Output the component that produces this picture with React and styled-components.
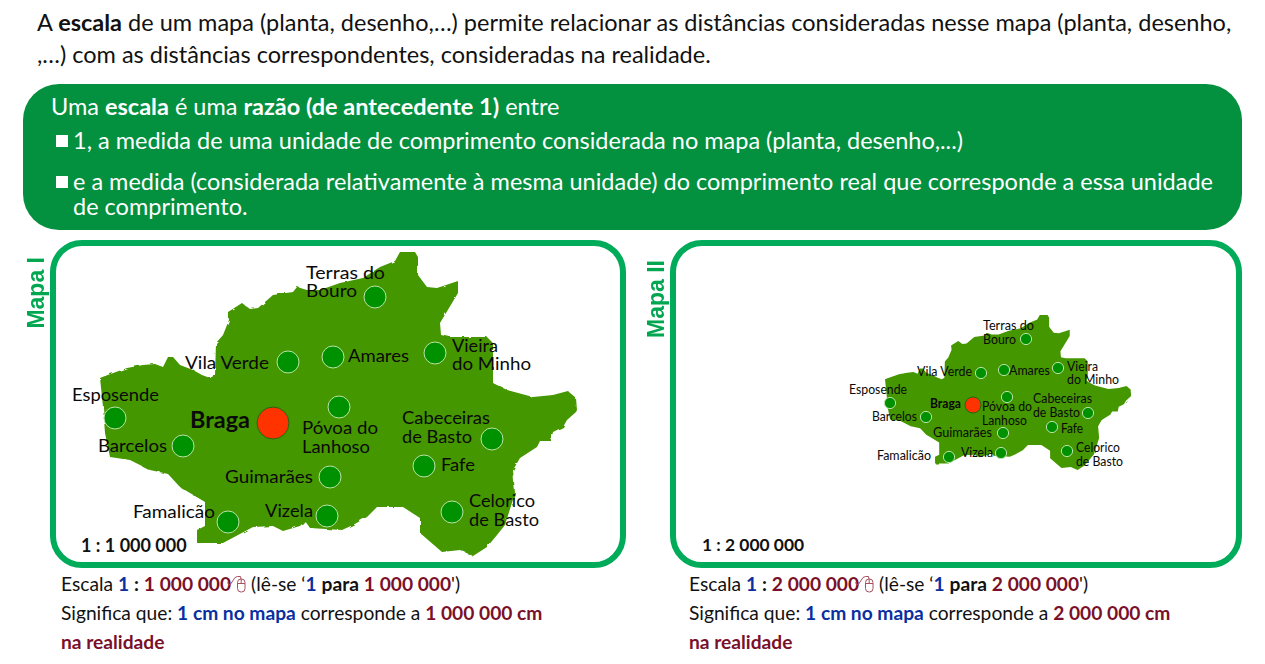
import React from "react";
import styled, { createGlobalStyle } from "styled-components";

const Global = createGlobalStyle`
  html, body { margin: 0; padding: 0; background: #fff; }
  body { font-family: Lato, "Open Sans", sans-serif; color: #111; }
`;

const Page = styled.div`
  width: 1265px;
  height: 664px;
  overflow: hidden;
`;
const Intro = styled.p`
  margin: 0;
  padding: 6px 0 0 37px;
  height: 84px;
  box-sizing: border-box;
  font-size: 23.5px;
  line-height: 32px;
  white-space: nowrap;
  b { font-weight: 700; }
`;
const GreenBox = styled.section`
  margin: 0 23px;
  height: 146px;
  box-sizing: border-box;
  padding: 10px 20px 0 28px;
  border-radius: 36px;
  background: #03903f;
  color: #fff;
  font-size: 23.5px;
  line-height: 25px;
`;
const BoxLead = styled.div`
  height: 25px;
`;
const BoxItem = styled.div`
  display: flex;
  align-items: flex-start;
  gap: 5px;
  margin: ${p => p.$top}px 0 0 5px;
`;
const Square = styled.span`
  flex: none;
  width: 12px;
  height: 12px;
  margin-top: 7px;
  background: #fff;
`;
const MapsRow = styled.div`
  display: flex;
  margin-top: 10px;
  padding-left: 23px;
  gap: 17px;
`;
const MapBlock = styled.div`
  display: grid;
  grid-template-columns: 27px ${p => p.$w}px;
  grid-template-rows: 328px auto;
`;
const SideLabel = styled.div`
  writing-mode: vertical-rl;
  transform: rotate(180deg);
  font-family: "Liberation Sans", Arial, sans-serif;
  font-weight: 700;
  font-size: 23px;
  line-height: 22px;
  color: #00a650;
  width: 22px;
  justify-self: start;
  margin-left: 2px;
  align-self: start;
  margin-top: ${p => p.$top}px;
`;
const Panel = styled.div`
  position: relative;
  box-sizing: border-box;
  border: 6px solid #00ab5a;
  border-radius: 32px;
  overflow: hidden;
`;
const MapSvg = styled.svg`
  display: block;
  width: 100%;
  height: 100%;
`;
const ScaleTag = styled.div`
  position: absolute;
  left: ${p => p.$left}px;
  bottom: 6px;
  font-weight: 700;
  font-size: ${p => p.$size}px;
  line-height: 22px;
  color: #111;
  white-space: nowrap;
`;
const Caption = styled.div`
  grid-column: 2;
  padding-left: ${p => p.$pad}px;
  font-size: 19.2px;
  line-height: 29px;
  margin-top: 1px;
  white-space: nowrap;
  color: #111;
`;
const Blue = styled.b`
  color: #0a2f9f;
`;
const Maroon = styled.b`
  color: #7a1029;
`;
const Dark = styled.b`
  color: #111;
`;
const MouseIcon = styled.svg`
  display: inline-block;
  width: 22px;
  height: 18px;
  vertical-align: -2px;
  margin: 0 3px 0 -5px;
`;
const PlaceLabel = styled.text`
  font-family: Lato, sans-serif;
  font-size: ${p => p.$size}px;
  font-weight: ${p => (p.$bold ? 700 : 400)};
  fill: #0a0a0a;
`;

const OUTLINE = [
  [100,378],[105,376],[127,368],[143,365],[155,364],[163,367],[168,357],[173,357],[180,365],[193,370],[202,375],[210,378],[215,375],[216,343],[223,335],[229,320],[228,312],[242,303],[250,309],[258,308],[273,295],[293,292],[297,287],[307,290],[320,290],[340,283],[363,278],[380,267],[395,261],[400,252],[415,252],[418,257],[418,275],[427,287],[437,288],[458,281],[458,293],[440,323],[441,335],[450,337],[487,337],[493,343],[493,383],[507,390],[533,397],[553,395],[568,391],[576,398],[577,410],[576,412],[567,420],[563,427],[553,432],[551,441],[540,441],[537,447],[520,458],[513,470],[515,493],[505,525],[497,535],[487,547],[473,556],[460,550],[442,552],[420,533],[420,518],[403,507],[377,507],[367,517],[353,525],[342,530],[310,528],[305,521],[300,526],[283,531],[273,526],[253,527],[223,543],[197,543],[197,530],[205,526],[205,502],[180,487],[168,474],[150,470],[130,460],[110,457],[105,433],[103,407],
].map(p => p.join(",")).join(" ");

const MAP_ONE = {
  size: 18, r: 11, capital: 16,
  labels: [
    ["Terras do",306,279,79],["Bouro",306,297,51],["Vila Verde",185,369,84],["Amares",348,362,61],
    ["Vieira",452,352,46],["do Minho",452,370,79],["Esposende",72,401,87],["Barcelos",98,452,69],
    ["Póvoa do",302,434,76],["Lanhoso",302,453,68],["Guimarães",225,483,88],["Famalicão",133,518,82],
    ["Vizela",265,517,48],["Cabeceiras",402,424,88],["de Basto",402,443,70],["Fafe",441,471,34],
    ["Celorico",469,507,66],["de Basto",469,526,70],
  ],
  braga: ["Braga",190,428,60,23],
  bragaDot: [273,423],
  dots: [[288,362],[333,357],[375,297],[435,353],[339,407],[115,418],[183,446],[330,477],[327,516],[228,522],[492,439],[424,466],[452,512]],
};
const MAP_TWO = {
  size: 12.5, r: 5.6, capital: 8,
  labels: [
    ["Terras do",983,330,51],["Bouro",983,344,33],["Vila Verde",917,376,55],["Amares",1009,375,41],
    ["Vieira",1067,371,31],["do Minho",1067,384,52],["Esposende",849,394,58],["Barcelos",872,421,45],
    ["Póvoa do",982,411,50],["Lanhoso",982,425,45],["Guimarães",933,437,59],["Famalicão",877,460,54],
    ["Vizela",961,457,32],["Cabeceiras",1033,403,59],["de Basto",1033,417,47],["Fafe",1061,433,22],
    ["Celorico",1076,452,44],["de Basto",1076,466,47],
  ],
  braga: ["Braga",930,408,31,12.5],
  bragaDot: [973,405],
  dots: [[1026,339],[981,373],[1004,370],[1058,368],[1007,397],[890,403],[926,417],[1088,413],[1052,427],[1003,433],[1001,453],[949,457],[1067,451]],
};

function RegionMap({ data, viewBox, transform, id, rough }) {
  return (
    <MapSvg viewBox={viewBox} preserveAspectRatio="none">
      <defs>
        <filter id={id} x="-5%" y="-5%" width="110%" height="110%" colorInterpolationFilters="sRGB">
          <feTurbulence type="fractalNoise" baseFrequency="0.12" numOctaves="2" seed="4" />
          <feDisplacementMap in="SourceGraphic" scale={rough} />
        </filter>
      </defs>
      <g filter={`url(#${id})`}>
        <polygon points={OUTLINE} transform={transform} fill="#459700" />
      </g>
      {data.dots.map(([cx, cy]) => (
        <circle key={`${cx}-${cy}`} cx={cx} cy={cy} r={data.r} fill="#009100" stroke="#b9e3a8" strokeWidth="1" />
      ))}
      <circle cx={data.bragaDot[0]} cy={data.bragaDot[1]} r={data.capital} fill="#ff3300" stroke="#1c6b12" strokeWidth="1" />
      {data.labels.map(([t, x, y, w]) => (
        <PlaceLabel key={`${t}-${x}`} x={x} y={y} $size={data.size} textLength={w} lengthAdjust="spacingAndGlyphs">{t}</PlaceLabel>
      ))}
      <PlaceLabel x={data.braga[1]} y={data.braga[2]} $size={data.braga[4]} $bold textLength={data.braga[3]} lengthAdjust="spacingAndGlyphs">{data.braga[0]}</PlaceLabel>
    </MapSvg>
  );
}

const Mouse = () => (
  <MouseIcon viewBox="0 0 22 18" fill="none" stroke="#a9505f" strokeWidth="1">
    <path d="M1 7.5 L4 10 L9 2.5 Q11 1 14.5 1.5 L15 4" />
    <rect x="11.5" y="4" width="7.5" height="13" rx="3.5" />
    <path d="M11.5 8.5 H19 M15.2 4 V8.5" />
  </MouseIcon>
);

const ScaleCaption = ({ value, pad }) => (
  <Caption $pad={pad}>
    Escala <Blue>1</Blue> <Dark>:</Dark> <Maroon>{value}</Maroon><Mouse />(lê-se ‘<Blue>1</Blue> <Dark>para</Dark> <Maroon>{value}</Maroon>')
    <br />
    Significa que: <Blue>1 cm no mapa</Blue> corresponde a <Maroon>{value} cm</Maroon>
    <br />
    <Maroon>na realidade</Maroon>
  </Caption>
);

export default function App() {
  return (
    <Page>
      <Global />
      <Intro>
        A <b>escala</b> de um mapa (planta, desenho,…) permite relacionar as distâncias consideradas nesse mapa (planta, desenho,
        <br />
        ,…) com as distâncias correspondentes, consideradas na realidade.
      </Intro>
      <GreenBox>
        <BoxLead>Uma <b>escala</b> é uma <b>razão (de antecedente 1)</b> entre</BoxLead>
        <BoxItem $top={9}>
          <Square />
          <span>1, a medida de uma unidade de comprimento considerada no mapa (planta, desenho,...)</span>
        </BoxItem>
        <BoxItem $top={16}>
          <Square />
          <span>e a medida (considerada relativamente à mesma unidade) do comprimento real que corresponde a essa unidade de comprimento.</span>
        </BoxItem>
      </GreenBox>
      <MapsRow>
        <MapBlock $w={576}>
          <SideLabel $top={17}>Mapa I</SideLabel>
          <Panel>
            <RegionMap data={MAP_ONE} viewBox="56 246 564 316" id="roughOne" rough={3} />
            <ScaleTag $left={25} $size={18}>1 : 1 000 000</ScaleTag>
          </Panel>
          <ScaleCaption value="1 000 000" pad={11} />
        </MapBlock>
        <MapBlock $w={572}>
          <SideLabel $top={20}>Mapa II</SideLabel>
          <Panel>
            <RegionMap
              data={MAP_TWO}
              viewBox="676 246 560 316"
              id="roughTwo"
              rough={1.5}
              transform="translate(885 315) scale(.516 .51) translate(-100 -252)"
            />
            <ScaleTag $left={26} $size={17.4}>1 : 2 000 000</ScaleTag>
          </Panel>
          <ScaleCaption value="2 000 000" pad={19} />
        </MapBlock>
      </MapsRow>
    </Page>
  );
}
